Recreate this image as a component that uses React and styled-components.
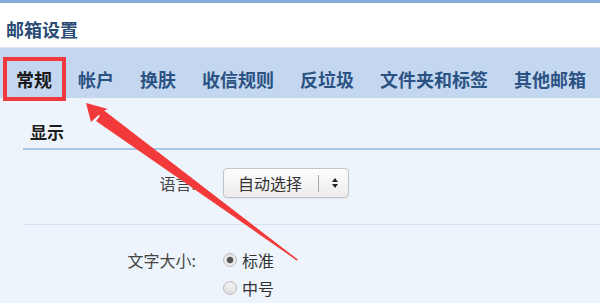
import React from "react";
import styled, { createGlobalStyle } from "styled-components";

const GlobalStyle = createGlobalStyle`
  html, body {
    margin: 0;
    padding: 0;
    background: #eef4fb;
  }
  body {
    font-family: "Noto Sans CJK SC", "Noto Sans", sans-serif;
  }
`;

const Page = styled.div`
  position: relative;
  width: 600px;
  height: 303px;
  overflow: hidden;
  background: #eef4fb;
  border-top: 3px solid #86acdc;
  box-sizing: border-box;
`;

const Header = styled.div`
  height: 44px;
  box-sizing: border-box;
  display: flex;
  align-items: center;
  padding: 7px 0 0 6px;
  background: #ffffff;
`;

const Title = styled.h1`
  margin: 0;
  font-size: 18px;
  font-weight: bold;
  color: #2a4b73;
`;

const TabBar = styled.div`
  height: 38px;
  display: flex;
  align-items: center;
  gap: 26px;
  padding: 12px 0 0 16px;
  background: #c3d8f0;
  border-top: 1px solid #dde8f4;
`;

const Tab = styled.span`
  position: relative;
  font-size: 18px;
  line-height: 24px;
  font-weight: bold;
  white-space: nowrap;
  color: ${(p) => (p.active ? "#1a1a1a" : "#2c5283")};

  &::after {
    content: "";
    display: ${(p) => (p.active ? "block" : "none")};
    position: absolute;
    left: -13px;
    right: -14px;
    top: -10px;
    bottom: -10px;
    border: 4px solid #f2393d;
  }
`;

const Content = styled.div`
  padding-left: 23px;
`;

const Section = styled.div`
  border-bottom: ${(p) => (p.strong ? "2px solid #a8c7e8" : "1px solid #d5e3f2")};
`;

const SectionTitle = styled.h2`
  margin: 0;
  box-sizing: border-box;
  height: 50px;
  padding: 22px 0 0 7px;
  font-size: 17px;
  line-height: 24px;
  font-weight: bold;
  color: #1e1e1e;
`;

const Row = styled.div`
  display: grid;
  grid-template-columns: 173px auto;
  column-gap: ${(p) => p.gap || 27}px;
  align-items: ${(p) => (p.top ? "start" : "center")};
  padding: ${(p) => p.pad || "0"};
`;

const Label = styled.label`
  text-align: right;
  font-size: 16px;
  color: #444;
  line-height: 28px;
`;

const Select = styled.div`
  width: 126px;
  height: 30px;
  box-sizing: border-box;
  display: flex;
  align-items: center;
  padding-left: 14px;
  border: 1px solid #c4c4c4;
  border-radius: 4px;
  background: linear-gradient(#fdfdfd, #ececec);
  box-shadow: 0 1px 1px rgba(0, 0, 0, 0.06);
  font-size: 16px;
  color: #333;
`;

const SelectText = styled.span`
  flex: 1;
`;

const SelectDivider = styled.span`
  width: 1px;
  height: 17px;
  background: #a9a9a9;
  margin-right: 9px;
`;

const SelectArrows = styled.span`
  width: 14px;
  display: flex;
  flex-direction: column;
  align-items: center;
  gap: 2px;
  margin-right: 6px;

  &::before,
  &::after {
    content: "";
    width: 0;
    height: 0;
    border-left: 3px solid transparent;
    border-right: 3px solid transparent;
  }
  &::before {
    border-bottom: 4px solid #222;
  }
  &::after {
    border-top: 4px solid #222;
  }
`;

const RadioList = styled.div`
  display: flex;
  flex-direction: column;
`;

const RadioItem = styled.div`
  display: flex;
  align-items: center;
  gap: 5px;
  height: 28px;
  font-size: 16px;
  color: #333;
`;

const RadioDot = styled.span`
  width: 14px;
  height: 14px;
  box-sizing: border-box;
  border-radius: 50%;
  border: 1px solid #bdbdbd;
  background: ${(p) =>
    p.checked
      ? "radial-gradient(circle, #555 0 2.8px, #ececec 3.8px)"
      : "linear-gradient(#f6f6f6, #dedede)"};
  box-shadow: inset 0 1px 1px rgba(0, 0, 0, 0.08);
`;

const ArrowLayer = styled.svg`
  position: absolute;
  left: 0;
  top: -3px;
  pointer-events: none;
`;

const tabs = ["常规", "帐户", "换肤", "收信规则", "反垃圾", "文件夹和标签", "其他邮箱"];

export default function App() {
  return (
    <>
      <GlobalStyle />
      <Page>
        <Header>
          <Title>邮箱设置</Title>
        </Header>
        <TabBar>
          {tabs.map((t, i) => (
            <Tab key={t} active={i === 0}>
              {t}
            </Tab>
          ))}
        </TabBar>
        <Content>
          <Section strong>
            <SectionTitle>显示</SectionTitle>
          </Section>
          <Section>
            <Row pad="18px 0 26px">
              <Label>语言:</Label>
              <Select>
                <SelectText>自动选择</SelectText>
                <SelectDivider />
                <SelectArrows />
              </Select>
            </Row>
          </Section>
          <Row top gap={27} pad="21px 0 0">
            <Label>文字大小:</Label>
            <RadioList>
              <RadioItem>
                <RadioDot checked />
                标准
              </RadioItem>
              <RadioItem>
                <RadioDot />
                中号
              </RadioItem>
            </RadioList>
          </Row>
        </Content>
        <ArrowLayer width="600" height="303" viewBox="0 0 600 303">
          <polygon points="86,103 91,122 98.5,115 297,260.5 297.6,259.6 104,110.5 108,109" fill="#f33a3a" />
          <polygon points="96,121 104,111 297.6,259.6 297,260.5" fill="#f33a3a" />
        </ArrowLayer>
      </Page>
    </>
  );
}
